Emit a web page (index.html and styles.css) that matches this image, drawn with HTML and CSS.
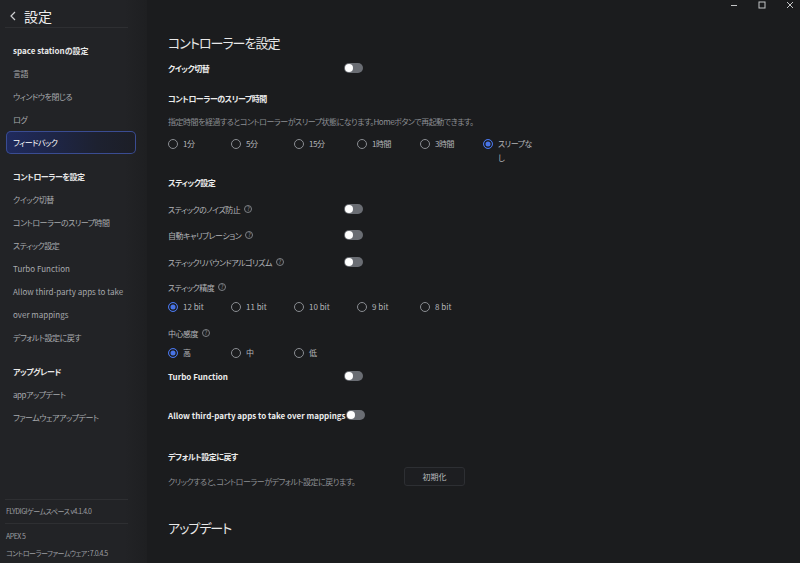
FILE: index.html
```html
<!DOCTYPE html>
<html lang="ja">
<head>
  <meta charset="UTF-8">
  <title>設定</title>
  <link rel="stylesheet" href="styles.css">
</head>
<body>
  <div class="app">
    <aside class="sidebar">
      <div class="side-head">
        <svg class="back" width="8" height="10" viewBox="0 0 8 10"><path d="M6 1 L2 5 L6 9" fill="none" stroke="#cfd0d2" stroke-width="1.2"/></svg>
        <span class="side-title">設定</span>
      </div>
      <div class="side-line"></div>

      <nav class="side-nav">
        <div class="nav-item nav-group en">space stationの設定</div>
        <div class="nav-item">言語</div>
        <div class="nav-item">ウィンドウを閉じる</div>
        <div class="nav-item">ログ</div>
        <div class="nav-item active">フィードバック</div>

        <div class="nav-item nav-group spaced">コントローラーを設定</div>
        <div class="nav-item">クイック切替</div>
        <div class="nav-item">コントローラーのスリープ時間</div>
        <div class="nav-item">スティック設定</div>
        <div class="nav-item en">Turbo Function</div>
        <div class="nav-item en">Allow third-party apps to take<br>over mappings</div>
        <div class="nav-item">デフォルト設定に戻す</div>

        <div class="nav-item nav-group spaced">アップグレード</div>
        <div class="nav-item">appアップデート</div>
        <div class="nav-item">ファームウェアアップデート</div>
      </nav>

      <div class="side-foot">
        <div class="side-line"></div>
        <div class="foot-row tall">FLYDIGIゲームスペース v4.1.4.0</div>
        <div class="side-line"></div>
        <div class="foot-rows">
          <div class="foot-row">APEX 5</div>
          <div class="foot-row">コントローラーファームウェア：7.0.4.5</div>
        </div>
      </div>
    </aside>

    <main class="content">
      <div class="titlebar">
        <svg width="10" height="10" viewBox="0 0 10 10"><path d="M2 5.5 H8" stroke="#c4c5c7" stroke-width="1"/></svg>
        <svg width="10" height="10" viewBox="0 0 10 10"><rect x="2" y="2" width="6" height="6" fill="none" stroke="#c4c5c7" stroke-width="1"/></svg>
        <svg width="10" height="10" viewBox="0 0 10 10"><path d="M2 2 L8 8 M8 2 L2 8" stroke="#c4c5c7" stroke-width="1"/></svg>
      </div>

      <h1 class="page-title">コントローラーを設定</h1>

      <div class="row m3">
        <div class="label strong">クイック切替</div>
        <div class="toggle"></div>
      </div>

      <div class="heading m11">コントローラーのスリープ時間</div>
      <div class="row m2">
        <div class="label desc">指定時間を経過するとコントローラーがスリープ状態になります。Homeボタンで再起動できます。</div>
      </div>
      <div class="radios m3">
        <div class="radio"><span class="dot"></span><span>1分</span></div>
        <div class="radio"><span class="dot"></span><span>5分</span></div>
        <div class="radio"><span class="dot"></span><span>15分</span></div>
        <div class="radio"><span class="dot"></span><span>1時間</span></div>
        <div class="radio"><span class="dot"></span><span>3時間</span></div>
        <div class="radio on"><span class="dot"></span><span class="narrow">スリープなし</span></div>
      </div>

      <div class="heading m5">スティック設定</div>
      <div class="row m6">
        <div class="label">スティックのノイズ防止 <span class="help">?</span></div>
        <div class="toggle"></div>
      </div>
      <div class="row m6">
        <div class="label">自動キャリブレーション <span class="help">?</span></div>
        <div class="toggle"></div>
      </div>
      <div class="row m7">
        <div class="label">スティックリバウンドアルゴリズム <span class="help">?</span></div>
        <div class="toggle"></div>
      </div>
      <div class="row m5">
        <div class="label">スティック精度 <span class="help">?</span></div>
      </div>
      <div class="radios en">
        <div class="radio on"><span class="dot"></span><span>12 bit</span></div>
        <div class="radio"><span class="dot"></span><span>11 bit</span></div>
        <div class="radio"><span class="dot"></span><span>10 bit</span></div>
        <div class="radio"><span class="dot"></span><span>9 bit</span></div>
        <div class="radio"><span class="dot"></span><span>8 bit</span></div>
      </div>
      <div class="row m6">
        <div class="label">中心感度 <span class="help">?</span></div>
      </div>
      <div class="radios">
        <div class="radio on"><span class="dot"></span><span>高</span></div>
        <div class="radio"><span class="dot"></span><span>中</span></div>
        <div class="radio"><span class="dot"></span><span>低</span></div>
      </div>

      <div class="row m3">
        <div class="label strong en">Turbo Function</div>
        <div class="toggle"></div>
      </div>

      <div class="row m19">
        <div class="label strong en">Allow third-party apps to take over mappings</div>
        <div class="toggle"></div>
      </div>

      <div class="heading m22">デフォルト設定に戻す</div>
      <div class="row m4">
        <div class="label wide desc">クリックすると、コントローラーがデフォルト設定に戻ります。</div>
        <button class="reset-btn">初期化</button>
      </div>

      <h1 class="page-title m25">アップデート</h1>
    </main>
  </div>
</body>
</html>
```

FILE: styles.css
```css
* {
  margin: 0;
  padding: 0;
  box-sizing: border-box;
}

html, body {
  width: 100%;
  height: 100%;
  background: #1b1c1e;
  overflow: hidden;
  font-family: "Noto Sans CJK JP", "Noto Sans", sans-serif;
  font-feature-settings: "palt";
  letter-spacing: -0.5px;
}

.en {
  letter-spacing: 0;
}

.app {
  display: flex;
  height: 563px;
}

/* sidebar */
.sidebar {
  width: 147px;
  flex-shrink: 0;
  display: flex;
  flex-direction: column;
  background: linear-gradient(90deg, #222326 85%, #1e1f21);
}

.side-head {
  height: 27px;
  padding: 4px 0 0 9px;
  display: flex;
  align-items: center;
  gap: 7px;
}

.side-title {
  font-size: 14px;
  letter-spacing: 0;
  color: #eeeeee;
}

.side-line {
  height: 1px;
  margin: 0 19px 0 5px;
  background: #2e2f32;
}

.side-nav {
  padding-top: 11px;
}

.nav-item {
  margin: 0 11px 0 6px;
  padding: 0 7px;
  line-height: 23px;
  font-size: 8px;
  color: #a7a9ad;
  border-radius: 5px;
  white-space: nowrap;
}

.nav-group {
  font-weight: 700;
  color: #e8e8e8;
}

.nav-group.spaced {
  margin-top: 11px;
}

.nav-item.active {
  color: #ffffff;
  box-shadow: inset 0 0 0 1px #3a4c92;
  background: linear-gradient(90deg, #1f2a5e, #1d2130 70%, #1c1e26);
}

.side-foot {
  margin-top: auto;
}

.foot-row {
  padding-left: 6px;
  font-size: 7px;
  color: #9c9ea2;
  line-height: 17px;
  white-space: nowrap;
}

.foot-row.tall {
  line-height: 23px;
}

.foot-rows {
  padding: 4px 0 1px;
}

/* main */
.content {
  flex: 1;
  padding-left: 21px;
}

.titlebar {
  height: 12px;
  display: flex;
  justify-content: flex-end;
  gap: 18px;
  padding-right: 5px;
}

.page-title {
  margin-top: 19px;
  height: 24px;
  line-height: 24px;
  font-size: 13px;
  letter-spacing: -1px;
  font-weight: 400;
  color: #e8e8e8;
}

.row {
  height: 20px;
  display: flex;
  align-items: center;
}

.label {
  min-width: 176px;
  display: flex;
  align-items: center;
  gap: 3px;
  font-size: 8px;
  color: #b3b5b9;
  white-space: nowrap;
}

.label.strong {
  font-weight: 700;
  color: #ececec;
}

.label.desc {
  color: #8b8e93;
}

.label.wide {
  min-width: 236px;
}

.heading {
  height: 20px;
  line-height: 20px;
  font-size: 8px;
  font-weight: 700;
  color: #ececec;
}

.help {
  width: 8px;
  height: 8px;
  margin-left: 1px;
  border: 1px solid #7d8085;
  border-radius: 50%;
  font-size: 6px;
  line-height: 6px;
  letter-spacing: 0;
  text-align: center;
  color: #8d9094;
}

.toggle {
  position: relative;
  width: 19px;
  height: 10px;
  border-radius: 5px;
  background: #6a6d73;
}

.toggle::before {
  content: "";
  position: absolute;
  top: 1px;
  left: 1px;
  width: 8px;
  height: 8px;
  border-radius: 50%;
  background: #ffffff;
}

.radios {
  display: grid;
  grid-template-columns: repeat(5, 63px) 55px;
  padding: 3px 0;
}

.radio {
  display: flex;
  align-items: flex-start;
  gap: 5px;
  font-size: 8px;
  line-height: 14px;
  color: #b3b5b9;
}

.dot {
  flex-shrink: 0;
  width: 10px;
  height: 10px;
  margin-top: 2px;
  border: 1px solid #8a8d92;
  border-radius: 50%;
}

.radio.on .dot {
  border-color: #4874e6;
  background: #4874e6;
  box-shadow: inset 0 0 0 1.5px #1b1c1e;
}

.narrow {
  width: 36px;
}

.reset-btn {
  margin-bottom: 9px;
  width: 61px;
  height: 19px;
  border: 1px solid #2d2f33;
  border-radius: 3px;
  background: #1d1e21;
  color: #b8babd;
  font-family: inherit;
  font-size: 8px;
}

.m2 { margin-top: 2px; }
.m3 { margin-top: 3px; }
.m4 { margin-top: 4px; }
.m5 { margin-top: 5px; }
.m6 { margin-top: 6px; }
.m7 { margin-top: 7px; }
.m11 { margin-top: 11px; }
.m19 { margin-top: 19px; }
.m22 { margin-top: 22px; }
.page-title.m25 { margin-top: 25px; }
```
